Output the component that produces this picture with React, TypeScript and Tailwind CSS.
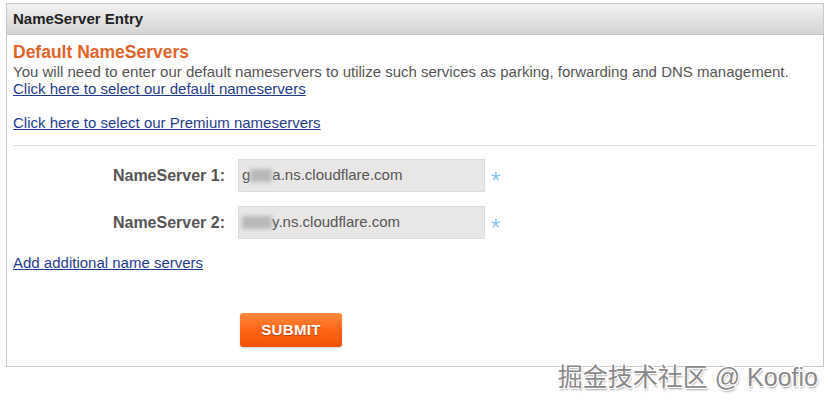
export default function App() {
  const rows = [
    { label: "NameServer 1:", head: "g", blur: "w-[22px]", tail: "a.ns.cloudflare.com" },
    { label: "NameServer 2:", head: "", blur: "w-[30px]", tail: "y.ns.cloudflare.com" },
  ];

  return (
    <div
      className="relative w-[836px] h-[404px] bg-white pt-[3px] pl-[6px]"
      style={{ fontFamily: '"Liberation Sans", Arial, sans-serif' }}
    >
      <div className="w-[818px] h-[364px] border border-[#c8c8c8]">
        {/* header */}
        <div className="h-[31px] bg-gradient-to-b from-[#f2f2f2] to-[#d4d4d4] border-b border-[#c4c4c4] flex items-center pl-[6px]">
          <h1 className="text-[15px] font-bold text-[#222]">NameServer Entry</h1>
        </div>

        <div className="px-[6px] pt-[6px]">
          <h2 className="text-[17.5px] leading-[22px] font-bold text-[#e0642a]">Default NameServers</h2>
          <p className="text-[15px] leading-[17px] text-[#555]">
            You will need to enter our default nameservers to utilize such services as parking, forwarding and DNS management.
          </p>
          <a href="#" className="block text-[15px] leading-[17px] text-[#1f3c8c] underline">
            Click here to select our default nameservers
          </a>
          <a href="#" className="block mt-[17px] text-[15px] leading-[17px] text-[#1f3c8c] underline">
            Click here to select our Premium nameservers
          </a>

          <div className="mt-[14px] border-t border-[#dedede]" />

          <div className="mt-[13px] flex flex-col gap-[14px]">
            {rows.map((r) => (
              <div key={r.label} className="flex items-center">
                <label className="w-[212px] text-right text-[16px] font-bold text-[#555]">{r.label}</label>
                <div className="ml-[13px] w-[247px] h-[33px] bg-[#e8e7e6] border border-[#dcdcdc] flex items-center pl-[3px] text-[15px] text-[#555]">
                  {r.head}
                  <span className={`inline-block ${r.blur} h-[13px] bg-[#b8b8b8] blur-[2px]`} />
                  {r.tail}
                </div>
                <span className="ml-[6px] text-[24px] leading-none translate-y-[5px] text-[#8ac6ee]">*</span>
              </div>
            ))}
          </div>

          <a href="#" className="block mt-[15px] text-[15px] leading-[17px] text-[#1f3c8c] underline">
            Add additional name servers
          </a>

          <button className="mt-[42px] ml-[227px] w-[102px] h-[34px] rounded-[3px] bg-gradient-to-b from-[#ff8a3c] via-[#ff6416] to-[#f25200] text-white text-[15px] font-bold tracking-wide [text-shadow:0_1px_1px_rgba(120,40,0,0.6)] shadow-[0_1px_2px_rgba(0,0,0,0.2)]">
            SUBMIT
          </button>
        </div>
      </div>

      <div
        className="absolute right-[18px] top-[359px] text-[25px] text-[#8a8a8a] [text-shadow:1px_1px_0_#fff,-1px_-1px_0_#fff,1px_-1px_0_#fff,-1px_1px_0_#fff,1px_2px_2px_rgba(0,0,0,0.4)]"
        style={{ fontFamily: '"Liberation Sans", "Noto Sans CJK SC", sans-serif' }}
      >
        掘金技术社区 @ Koofio
      </div>
    </div>
  );
}
